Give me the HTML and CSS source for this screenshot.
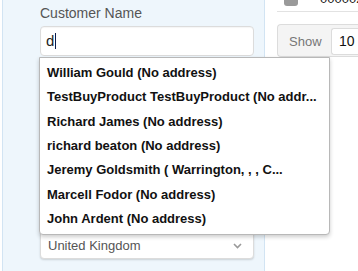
FILE: index.html
```html
<!DOCTYPE html>
<html lang="en">
<head>
    <meta charset="UTF-8">
    <meta name="viewport" content="width=device-width, initial-scale=1.0">
    <title>Order</title>
    <link rel="stylesheet" href="styles.css">
</head>
<body>
    <div class="layout">
        <div class="sidebar">
            <div class="field customer">
                <label class="field-label">Customer Name</label>
                <div class="text-input">d<span class="caret"></span></div>
                <ul class="suggestions">
                    <li>William Gould (No address)</li>
                    <li>TestBuyProduct TestBuyProduct (No addr...</li>
                    <li>Richard James (No address)</li>
                    <li>richard beaton (No address)</li>
                    <li>Jeremy Goldsmith ( Warrington, , , C...</li>
                    <li>Marcell Fodor (No address)</li>
                    <li>John Ardent (No address)</li>
                </ul>
            </div>
            <div class="field">
                <div class="text-area"></div>
            </div>
            <div class="field">
                <div class="select-box">
                    <span>United Kingdom</span>
                    <svg class="chevron" width="9" height="6" viewBox="0 0 9 6"><polyline points="1,1 4.5,4.5 8,1" fill="none" stroke="#9a9a9a" stroke-width="1.6"/></svg>
                </div>
            </div>
        </div>
        <div class="main">
            <div class="recent-row">
                <span class="info-icon"></span>
                <span class="order-no">000002</span>
            </div>
            <div class="length-box">
                <span class="length-label">Show</span>
                <div class="length-select">10</div>
            </div>
        </div>
    </div>
</body>
</html>
```
FILE: styles.css
```css
body{
    margin: 0;
    font-family: "Liberation Sans", Arial, sans-serif;
    background-color: #fff;
    width: 358px;
    height: 271px;
    overflow: hidden;
}
.layout{
    display: flex;
    height: 271px;
}
.sidebar{
    width: 224px;
    margin-left: 2px;
    padding-left: 37px;
    border-left: 1px solid #d2e4f3;
    border-right: 1px solid #d2e4f3;
    background-color: #eef6fc;
    flex-shrink: 0;
}
.field{
    margin-bottom: 12px;
}
.customer{
    position: relative;
    padding-top: 5px;
}
.field-label{
    display: block;
    font-size: 14px;
    line-height: 16px;
    color: #555;
    margin-bottom: 5px;
}
.text-input{
    height: 30px;
    width: 214px;
    border: 1px solid #dcdcdc;
    border-radius: 4px;
    background-color: #fff;
    box-sizing: border-box;
    font-size: 15px;
    line-height: 28px;
    color: #222;
    padding-left: 5px;
    box-shadow: inset 0 1px 1px rgba(0, 0, 0, 0.04);
}
.caret{
    display: inline-block;
    width: 1px;
    height: 16px;
    margin-left: 1px;
    vertical-align: -3px;
    background-color: #0a1a4a;
}
.suggestions{
    position: absolute;
    top: 57px;
    left: -1px;
    width: 291px;
    box-sizing: border-box;
    margin: 0;
    padding: 3px 0;
    list-style: none;
    background-color: #fff;
    border: 1px solid #b8b8b8;
    border-radius: 0 0 4px 4px;
    box-shadow: 0 2px 4px rgba(0, 0, 0, 0.2);
    z-index: 2;
}
.suggestions li{
    height: 24.33px;
    line-height: 24px;
    padding-left: 7px;
    font-size: 13px;
    font-weight: bold;
    color: #111;
    white-space: nowrap;
}
.text-area{
    height: 149px;
    width: 214px;
    border: 1px solid #dcdcdc;
    border-radius: 4px;
    background-color: #fff;
    box-sizing: border-box;
}
.select-box{
    height: 30px;
    width: 214px;
    box-sizing: border-box;
    border: 1px solid #dcdcdc;
    border-radius: 4px;
    background-color: #fff;
    box-shadow: 0 1px 2px rgba(0, 0, 0, 0.15);
    display: flex;
    align-items: center;
    justify-content: space-between;
    padding: 3px 11px 0 7px;
    font-size: 13px;
    color: #555;
}
.main{
    flex: 1;
    padding-left: 12px;
}
.recent-row{
    margin-top: -14px;
    height: 25px;
    border-bottom: 1px solid #e2e2e2;
    display: flex;
    align-items: center;
    padding-left: 7px;
}
.info-icon{
    width: 14px;
    height: 14px;
    border-radius: 3px;
    background-color: #9a9a9a;
}
.order-no{
    margin-left: 22px;
    font-size: 13px;
    color: #222;
}
.length-box{
    margin-top: 12px;
    display: flex;
    align-items: center;
    padding: 3px 0 1px 11px;
    border: 1px solid #dcdcdc;
    border-right: none;
    border-radius: 4px 0 0 4px;
    background-color: #f4f4f4;
}
.length-label{
    font-size: 13px;
    color: #777;
    width: 42px;
}
.length-select{
    flex: 1;
    height: 27px;
    box-sizing: border-box;
    border: 1px solid #dcdcdc;
    border-right: none;
    border-radius: 3px 0 0 3px;
    background-color: #fff;
    font-size: 14px;
    line-height: 25px;
    padding-left: 7px;
    color: #111;
}
```
